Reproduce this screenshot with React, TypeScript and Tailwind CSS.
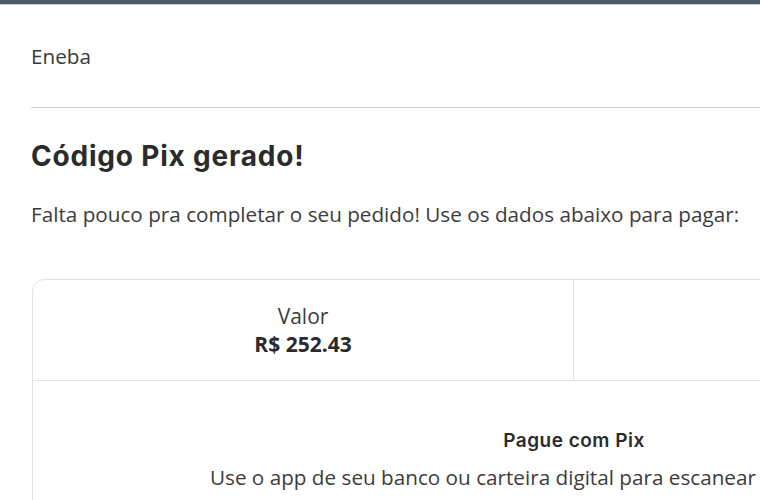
import React from "react";

const body = { fontFamily: '"Open Sans", "Liberation Sans", sans-serif' };
const heading = { fontFamily: 'Inter, "Noto Sans", sans-serif' };

export default function App() {
  return (
    <div className="w-[760px] h-[500px] overflow-hidden bg-white text-[#3c3c3c]" style={body}>
      <div className="h-[4px] bg-[#4b5a67]" />
      <div className="h-px bg-[#c9d0d6]" />
      <div className="pl-[31px] w-[1116px]">
        <div className="pt-[37px] pb-[37px] text-[20.7px] leading-[28px] text-[#3a3a3a]">Eneba</div>
        <div className="h-px bg-[#cfcfcf]" />
        <h1
          className="mt-[30px] text-[28px] leading-[36px] font-bold text-[#2b2b2b] tracking-[0.8px]"
          style={heading}
        >
          Código Pix gerado!
        </h1>
        <p className="mt-[26px] text-[20.7px] leading-[28px] text-[#3c3c3c] whitespace-nowrap">
          Falta pouco pra completar o seu pedido! Use os dados abaixo para pagar:
        </p>
        <div className="mt-[51px] ml-px border border-[#e3e3e3] rounded-[12px]">
          <div className="grid grid-cols-2 h-[101px] border-b border-[#e3e3e3]">
            <div className="flex flex-col items-center justify-center border-r border-[#e3e3e3]">
              <span className="text-[21px] leading-[28px] text-[#3c3c3c]">Valor</span>
              <span className="text-[21px] leading-[28px] font-bold text-[#2b2b2b]">R$ 252.43</span>
            </div>
            <div />
          </div>
          <div className="flex flex-col items-center pt-[46px] pb-[240px]">
            <span
              className="text-[19px] leading-[28px] font-semibold text-[#2b2b2b] tracking-[0.5px]"
              style={heading}
            >
              Pague com Pix
            </span>
            <span className="mt-[8px] text-[20.7px] leading-[28px] text-[#3c3c3c] whitespace-nowrap">
              Use o app de seu banco ou carteira digital para escanear o QR Code abaixo:
            </span>
          </div>
        </div>
      </div>
    </div>
  );
}
